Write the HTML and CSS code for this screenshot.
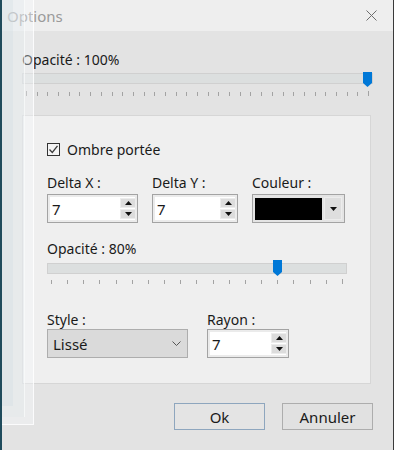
FILE: index.html
```html
<!DOCTYPE html>
<html lang="fr">
<head>
<meta charset="utf-8">
<title>Options</title>
<link rel="stylesheet" href="styles.css">
</head>
<body>
<div class="window">
  <div class="titlebar">
    <span class="title">Options</span>
    <svg class="close" width="11" height="11" viewBox="0 0 11 11"><path d="M0.5 0.5 L10.5 10.5 M10.5 0.5 L0.5 10.5" stroke="#6d6d6d" stroke-width="1" fill="none"/></svg>
  </div>
  <div class="content">
    <div class="label top-label">Opacité : 100%</div>
    <div class="slider s1">
      <div class="track"></div>
      <svg class="thumb" style="left:341px" width="9" height="15" viewBox="0 0 9 15"><path d="M0 0 H9 V11 L4.5 15 L0 11 Z" fill="#0078d7"/></svg>
      <div class="ticks t33">
        <i class="tall"></i><i></i><i></i><i></i><i></i><i></i><i></i><i></i><i></i><i></i><i></i><i></i><i></i><i></i><i></i><i></i><i></i><i></i><i></i><i></i><i></i><i></i><i></i><i></i><i></i><i></i><i></i><i></i><i></i><i></i><i></i><i></i><i class="tall"></i>
      </div>
    </div>

    <div class="panel">
      <div class="check-row">
        <span class="checkbox"><svg width="11" height="11" viewBox="0 0 11 11"><path d="M1.5 5.5 L4.3 8.5 L9.5 1.8" stroke="#3c3c3c" stroke-width="1.3" fill="none"/></svg></span>
        <span class="label">Ombre portée</span>
      </div>

      <div class="fields">
        <div class="field fx">
          <div class="label">Delta X :</div>
          <div class="spin">
            <span class="val">7</span>
            <span class="btns"><span class="b"><svg width="7" height="4" viewBox="0 0 7 4"><path d="M0 4 L3.5 0 L7 4 Z" fill="#111"/></svg></span><span class="b"><svg width="7" height="4" viewBox="0 0 7 4"><path d="M0 0 L3.5 4 L7 0 Z" fill="#111"/></svg></span></span>
          </div>
        </div>
        <div class="field fy">
          <div class="label">Delta Y :</div>
          <div class="spin">
            <span class="val">7</span>
            <span class="btns"><span class="b"><svg width="7" height="4" viewBox="0 0 7 4"><path d="M0 4 L3.5 0 L7 4 Z" fill="#111"/></svg></span><span class="b"><svg width="7" height="4" viewBox="0 0 7 4"><path d="M0 0 L3.5 4 L7 0 Z" fill="#111"/></svg></span></span>
          </div>
        </div>
        <div class="field fc">
          <div class="label">Couleur :</div>
          <div class="colorpick">
            <span class="swatch"></span>
            <span class="drop"><svg width="7" height="4" viewBox="0 0 7 4"><path d="M0 0 L3.5 4 L7 0 Z" fill="#111"/></svg></span>
          </div>
        </div>
      </div>

      <div class="label op2">Opacité : 80%</div>
      <div class="slider s2">
        <div class="track"></div>
        <svg class="thumb" style="left:226px" width="9" height="16" viewBox="0 0 9 16"><path d="M0 0 H9 V12 L4.5 16 L0 12 Z" fill="#0078d7"/></svg>
        <div class="ticks t19">
          <i></i><i></i><i></i><i></i><i></i><i></i><i></i><i></i><i></i><i></i><i></i><i></i><i></i><i></i><i></i><i></i><i></i><i></i><i class="tall"></i>
        </div>
      </div>

      <div class="fields bottom">
        <div class="field fs">
          <div class="label">Style :</div>
          <div class="combo">
            <span class="val">Lissé</span>
            <svg width="9" height="5" viewBox="0 0 9 5"><path d="M0.5 0.5 L4.5 4.5 L8.5 0.5" stroke="#555" stroke-width="1" fill="none"/></svg>
          </div>
        </div>
        <div class="field fr">
          <div class="label">Rayon :</div>
          <div class="spin">
            <span class="val">7</span>
            <span class="btns"><span class="b"><svg width="7" height="4" viewBox="0 0 7 4"><path d="M0 4 L3.5 0 L7 4 Z" fill="#111"/></svg></span><span class="b"><svg width="7" height="4" viewBox="0 0 7 4"><path d="M0 0 L3.5 4 L7 0 Z" fill="#111"/></svg></span></span>
          </div>
        </div>
      </div>
    </div>

    <div class="actions">
      <button class="btn default">Ok</button>
      <button class="btn">Annuler</button>
    </div>
  </div>
</div>

<div class="ghost g1"></div>
<div class="ghost g2"></div>
<div class="ghost g3"></div>
<div class="desk"></div>
<div class="edge"></div>
</body>
</html>
```

FILE: styles.css
```css
* { box-sizing: border-box; }

html, body {
  margin: 0;
  padding: 0;
}

body {
  width: 394px;
  height: 450px;
  overflow: hidden;
  position: relative;
  background: #e3e3e3;
  font-family: "Noto Sans", "Open Sans", sans-serif;
  font-size: 14px;
  color: #1a1a1a;
}

.window {
  display: flex;
  flex-direction: column;
  height: 450px;
}

.titlebar {
  height: 31px;
  background: #eeeeee;
  display: flex;
  align-items: center;
  justify-content: space-between;
  padding: 0 17px 0 7px;
}

.title {
  color: #9a9a9a;
  font-size: 15px;
  line-height: 18px;
}

.content {
  padding: 20px 21px 0 22px;
  display: flex;
  flex-direction: column;
}

.label {
  line-height: 18px;
  white-space: nowrap;
}

.slider {
  position: relative;
}

.track {
  height: 11px;
  background: #dcdfdf;
  border: 1px solid #d0d0d0;
}

.s1 { margin-top: 4px; }

.thumb {
  position: absolute;
  top: -1px;
  display: block;
}

.ticks {
  display: flex;
  justify-content: space-between;
  height: 5px;
  margin-top: 7px;
  padding: 0 4px 0 4px;
}

.ticks i {
  display: block;
  width: 1px;
  height: 4px;
  margin-top: 1px;
  background: #a3a3a3;
}

.ticks i.tall {
  height: 5px;
  margin-top: 0;
}

.panel {
  margin-top: 19px;
  margin-right: 2px;
  height: 269px;
  background: #efefef;
  border: 1px solid #d6d6d6;
  padding: 26px 0 0 24px;
  display: flex;
  flex-direction: column;
}

.check-row {
  display: flex;
  align-items: center;
  gap: 7px;
  height: 15px;
}

.checkbox {
  width: 13px;
  height: 13px;
  border: 1px solid #333;
  background: #f4f4f4;
  display: flex;
  align-items: center;
  justify-content: center;
}

.checkbox svg { display: block; }

.fields {
  display: flex;
  margin-top: 17px;
}

.field {
  display: flex;
  flex-direction: column;
  gap: 2px;
}

.fx { width: 91px; margin-right: 14px; }
.fy { width: 86px; margin-right: 14px; }
.fc { width: 93px; }

.spin {
  height: 29px;
  border: 1px solid #a3a3a3;
  background: #fff;
  box-shadow: inset 0 0 0 2px #ebebeb;
  display: flex;
  align-items: center;
  justify-content: space-between;
  padding: 0 1px 0 4px;
}

.val {
  font-size: 15px;
  line-height: 18px;
}

.btns {
  display: flex;
  flex-direction: column;
  gap: 1px;
}

.b {
  width: 16px;
  height: 10px;
  background: #dcdcdc;
  border: 1px solid #ececec;
  display: flex;
  align-items: center;
  justify-content: center;
}

.b svg { display: block; }

.colorpick {
  height: 29px;
  border: 1px solid #a3a3a3;
  background: #e4e4e4;
  display: flex;
  align-items: center;
  padding: 0 2px;
  gap: 2px;
}

.swatch {
  width: 68px;
  height: 22px;
  background: #000;
}

.drop {
  width: 18px;
  height: 23px;
  background: #dedede;
  border: 1px solid #ececec;
  display: flex;
  align-items: center;
  justify-content: center;
}

.op2 { margin-top: 17px; }

.s2 {
  margin-top: 5px;
  width: 300px;
}

.s2 .thumb { top: -3px; }

.s2 .ticks { margin-top: 5px; }

.bottom { margin-top: 27px; }

.bottom .field { gap: 0; }

.fs { width: 141px; margin-right: 19px; }
.fr { width: 82px; }

.combo {
  height: 29px;
  border: 1px solid #adadad;
  background: #dadada;
  display: flex;
  align-items: center;
  justify-content: space-between;
  padding: 0 6px 0 5px;
}

.combo svg { display: block; }

.actions {
  display: flex;
  justify-content: flex-end;
  gap: 17px;
  margin-top: 19px;
}

.btn {
  width: 91px;
  height: 27px;
  font-family: inherit;
  font-size: 15px;
  line-height: 18px;
  color: #1a1a1a;
  background: #e1e1e1;
  border: 1px solid #adadad;
  padding: 0;
}

.btn.default {
  border-color: #8ea6be;
  background: #e4e4e4;
}

.ghost {
  position: absolute;
  left: 0;
  top: 0;
  pointer-events: none;
}

.g1 {
  width: 34px;
  height: 425px;
  background: rgba(250, 253, 255, 0.35);
  border-right: 1px solid rgba(255, 255, 255, 0.8);
  border-bottom: 1px solid rgba(255, 255, 255, 0.8);
}

.g2 {
  width: 25px;
  height: 417px;
  background: rgba(220, 228, 232, 0.25);
  border-right: 1px solid rgba(255, 255, 255, 0.6);
}

.g3 {
  width: 13px;
  height: 406px;
  background: rgba(200, 215, 222, 0.25);
}

.desk {
  position: absolute;
  left: 0;
  top: 0;
  width: 2px;
  height: 450px;
  background: #1f4b5c;
}

.edge {
  position: absolute;
  right: 0;
  top: 0;
  width: 1px;
  height: 450px;
  background: #3a3a3a;
}
```
